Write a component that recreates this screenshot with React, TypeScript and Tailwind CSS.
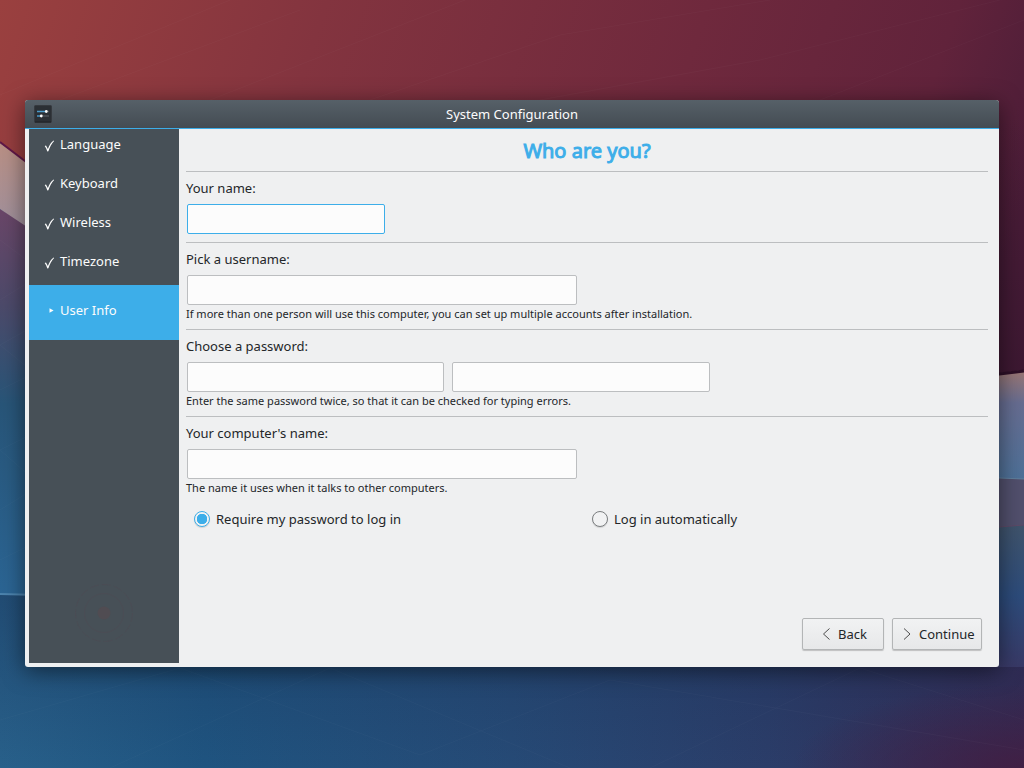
import { useState } from "react";
import type { ReactNode } from "react";

const steps = ["Language", "Keyboard", "Wireless", "Timezone"];

function Wallpaper() {
  return (
    <svg
      className="absolute inset-0 h-full w-full"
      viewBox="0 0 1024 768"
      preserveAspectRatio="none"
      aria-hidden="true"
    >
      <defs>
        <linearGradient id="red" gradientUnits="userSpaceOnUse" x1="0" y1="0" x2="980" y2="330">
          <stop offset="0" stopColor="#9a403f" />
          <stop offset="0.3" stopColor="#83343f" />
          <stop offset="0.65" stopColor="#6f293d" />
          <stop offset="0.88" stopColor="#61233b" />
          <stop offset="1" stopColor="#4c1d38" />
        </linearGradient>
        <linearGradient id="redShade" x1="0" y1="0" x2="0" y2="1">
          <stop offset="0.3" stopColor="#30142c" stopOpacity="0" />
          <stop offset="1" stopColor="#30142c" stopOpacity="0.6" />
        </linearGradient>
        <linearGradient id="blue" x1="0" y1="0" x2="1" y2="0">
          <stop offset="0" stopColor="#28608a" />
          <stop offset="0.2" stopColor="#1f5480" />
          <stop offset="0.5" stopColor="#264a76" />
          <stop offset="0.75" stopColor="#2b3d69" />
          <stop offset="1" stopColor="#352b54" />
        </linearGradient>
        <linearGradient id="leftEdge" x1="0" y1="0" x2="0" y2="1">
          <stop offset="0" stopColor="#6a4668" />
          <stop offset="0.25" stopColor="#4c4a6a" />
          <stop offset="0.5" stopColor="#285578" />
          <stop offset="1" stopColor="#2b6594" />
        </linearGradient>
        <linearGradient id="beam" x1="0" y1="0" x2="0" y2="1">
          <stop offset="0" stopColor="#b98f84" />
          <stop offset="1" stopColor="#9490a6" />
        </linearGradient>
        <linearGradient id="rightBeam" x1="0" y1="0" x2="0" y2="1">
          <stop offset="0" stopColor="#9a7672" />
          <stop offset="0.3" stopColor="#666c90" />
          <stop offset="1" stopColor="#4d7097" />
        </linearGradient>
        <linearGradient id="rightLow" x1="0" y1="0" x2="0" y2="1">
          <stop offset="0" stopColor="#3f536b" />
          <stop offset="0.5" stopColor="#2c4b7a" />
          <stop offset="1" stopColor="#383966" />
        </linearGradient>
        <radialGradient id="corner" cx="1" cy="1" r="0.5">
          <stop offset="0" stopColor="#431c40" stopOpacity="0.8" />
          <stop offset="1" stopColor="#431c40" stopOpacity="0" />
        </radialGradient>
        <linearGradient id="floor" x1="0" y1="0" x2="0" y2="1">
          <stop offset="0" stopColor="#182c50" stopOpacity="0.4" />
          <stop offset="1" stopColor="#182c50" stopOpacity="0" />
        </linearGradient>
      </defs>
      <rect width="1024" height="768" fill="url(#blue)" />
      <rect y="590" width="1024" height="178" fill="url(#floor)" />
      <rect x="560" y="600" width="464" height="168" fill="url(#corner)" />
      <path d="M0 209L80 255V598L0 594Z" fill="url(#leftEdge)" />
      <path d="M0 143L80 200V262L0 209Z" fill="url(#beam)" />
      <path d="M0 0H1024V370L900 386L80 202L0 142Z" fill="url(#red)" />
      <path d="M900 0H1024V370L900 386Z" fill="url(#redShade)" />
      <path d="M0 142L80 203" stroke="#601747" strokeWidth="2" />
      <path d="M900 386L1024 370V480L900 474Z" fill="url(#rightBeam)" />
      <path d="M900 386L1024 371" stroke="#2d1027" strokeWidth="3" />
      <path d="M900 474L1024 479V525L900 535Z" fill="#514f6c" />
      <path d="M900 474L1024 479" stroke="#60809d" strokeWidth="1" />
      <path d="M900 535L1024 525V667H900Z" fill="url(#rightLow)" />
      <path d="M900 535L1024 525" stroke="#5e4b68" strokeWidth="1" />
      <path d="M0 594L80 596" stroke="#4c83ad" strokeWidth="2" />
      <g stroke="#ffffff" strokeOpacity="0.025" fill="none">
        <path d="M0 95L230 0M60 100L300 10M210 100L465 0M370 100L560 35L770 0M540 100L760 60L1000 0M820 100L1024 20" />
        <path d="M0 240L80 300L0 345L80 410L0 450L80 520L0 560M0 300L80 250M0 390L80 350M0 510L80 460" />
        <path d="M0 720L180 668L420 755L610 680L1024 750M110 768L330 668L570 768M650 768L860 668L1024 720" />
      </g>
    </svg>
  );
}

function SettingsIcon() {
  return (
    <svg className="h-[18px] w-[18px]" viewBox="0 0 18 18" aria-hidden="true">
      <rect x="0.5" y="0.5" width="17" height="17" rx="1" fill="#2b2f34" stroke="#363a3f" />
      <path d="M1 17H17" stroke="#202327" />
      <path d="M3 6.5H12" stroke="#4a9ac9" strokeWidth="1.6" />
      <path d="M13.5 6.5H15M8.5 11H15" stroke="#4d5358" strokeWidth="1.6" />
      <path d="M3 11H7" stroke="#4a9ac9" strokeWidth="1.6" />
      <circle cx="12.3" cy="6.5" r="1.4" fill="#fcfcfc" />
      <circle cx="7.3" cy="11" r="1.4" fill="#fcfcfc" />
    </svg>
  );
}

function Check() {
  return (
    <svg className="mt-1 h-3 w-[11px] shrink-0" viewBox="0 0 11 12" aria-hidden="true">
      <path
        d="M0.7 6.1L2 5.4L3.9 9.1C5.2 5.4 7 2.4 9.7 0.5L10.1 0.9C7.5 4 5.6 7.3 4.4 11.3L3.3 11.5C2.7 9.5 1.9 7.8 0.7 6.1Z"
        fill="#fcfcfc"
      />
    </svg>
  );
}

function Ripple() {
  return (
    <svg className="mx-auto h-[60px] w-[60px]" viewBox="0 0 60 60" fill="none" aria-hidden="true">
      <circle cx="30" cy="30" r="6.5" fill="#504c52" />
      <circle cx="30" cy="30" r="19.5" stroke="#4b4d55" />
      <circle cx="30" cy="30" r="28.5" stroke="#4b4d55" strokeDasharray="9 3" />
    </svg>
  );
}

function Section({ id, label, hint, children }: { id: string; label: string; hint?: string; children: ReactNode }) {
  return (
    <section className="border-t border-[#bcbec0] pb-2">
      <label htmlFor={id} className="block h-8 text-[13px] leading-8">{label}</label>
      <div className="flex gap-2 px-px">{children}</div>
      {hint && <p className="h-4 text-[11px] leading-[18px]">{hint}</p>}
    </section>
  );
}

const field = "h-[30px] min-w-0 rounded-xs border bg-[#fcfcfc] px-2 text-[13px] outline-none focus:border-[#3daee9]";

const button =
  "flex h-8 items-center rounded-xs border border-[#b3b5b6] bg-linear-to-b from-[#f1f2f3] to-[#e7e8e9] pt-px text-[13px] shadow-[0_1px_1px_rgba(0,0,0,0.2)]";

function Radio({ label, checked, onChange }: { label: string; checked: boolean; onChange: () => void }) {
  return (
    <label className="flex items-center gap-[6px] text-[13px] leading-5">
      <input
        type="radio"
        name="login"
        checked={checked}
        onChange={onChange}
        className="h-4 w-4 appearance-none rounded-full border border-[#7b7e80] bg-[#f1f2f3] shadow-[0_1px_1px_rgba(0,0,0,0.12)] checked:border-[#3daee9] checked:bg-[radial-gradient(circle,#3daee9_5px,#f1f2f3_5.5px)]"
      />
      {label}
    </label>
  );
}

export default function App() {
  const [auto, setAuto] = useState(false);
  return (
    <div className="relative flex min-h-screen flex-col overflow-hidden px-[25px] pt-[100px] pb-[101px] font-['Noto_Sans',sans-serif] text-[#232629]">
      <Wallpaper />
      <div className="relative flex flex-1 flex-col overflow-hidden rounded-[3px] bg-[#eff0f1] shadow-[0_4px_22px_rgba(0,0,0,0.5)]">
        <header className="grid h-[29px] grid-cols-[1fr_auto_1fr] items-center border-b border-[#3daee9] bg-linear-to-b from-[#566068] to-[#444c53] px-[9px] text-[#fcfcfc]">
          <SettingsIcon />
          <h1 className="text-[13px] leading-5">System Configuration</h1>
        </header>
        <div className="flex flex-1">
          <nav className="mb-1 ml-1 flex w-[150px] shrink-0 flex-col bg-[#475057] text-[13px] leading-5 text-[#fcfcfc]">
            <ul className="flex flex-col gap-[19px] pt-[5px] pb-[14px]">
              {steps.map((step) => (
                <li key={step} className="flex items-center gap-[5px] pl-[15px]">
                  <Check />
                  {step}
                </li>
              ))}
            </ul>
            <div className="flex h-[55px] items-center bg-[#3daee9] pb-[6px] pl-5" aria-current="step">
              <svg className="mt-[2px] mr-[6px] h-[5px] w-[5px]" viewBox="0 0 5 5" aria-hidden="true">
                <path d="M0.5 0.3L4.6 2.5L0.5 4.7Z" fill="#fcfcfc" />
              </svg>
              User Info
            </div>
            <div className="mt-auto mb-5">
              <Ripple />
            </div>
          </nav>
          <form className="flex min-w-0 flex-1 flex-col pr-[11px] pl-[7px]" onSubmit={(e) => e.preventDefault()}>
            <h2 className="h-[42px] text-center text-[20px] leading-[44px] text-[#3daee9] [-webkit-text-stroke:1px_#3daee9]">
              Who are you?
            </h2>
            <Section id="name" label="Your name:">
              <input id="name" type="text" className={`${field} w-[198px] border-[#3daee9]`} />
            </Section>
            <Section
              id="username"
              label="Pick a username:"
              hint="If more than one person will use this computer, you can set up multiple accounts after installation."
            >
              <input id="username" type="text" className={`${field} w-[390px] border-[#bcbec0]`} />
            </Section>
            <Section
              id="password"
              label="Choose a password:"
              hint="Enter the same password twice, so that it can be checked for typing errors."
            >
              <input id="password" type="password" className={`${field} w-[257px] border-[#bcbec0]`} />
              <input
                type="password"
                aria-label="Repeat the password"
                className={`${field} w-[258px] border-[#bcbec0]`}
              />
            </Section>
            <Section id="host" label="Your computer's name:" hint="The name it uses when it talks to other computers.">
              <input id="host" type="text" className={`${field} w-[390px] border-[#bcbec0]`} />
            </Section>
            <div className="mt-[6px] grid grid-cols-2 gap-x-[2px] pl-2">
              <Radio label="Require my password to log in" checked={!auto} onChange={() => setAuto(false)} />
              <Radio label="Log in automatically" checked={auto} onChange={() => setAuto(true)} />
            </div>
            <div className="mt-auto mb-[17px] flex justify-end gap-2 pr-[6px]">
              <button type="button" className={`${button} w-[82px] gap-2 pl-[19px]`}>
                <svg className="mb-[2px] h-3 w-2" viewBox="0 0 8 12" fill="none" stroke="#4d4d4d" aria-hidden="true">
                  <path d="M7.5 0.5L1.5 6L7.5 11.5" />
                </svg>
                Back
              </button>
              <button type="submit" className={`${button} w-[90px] gap-2 pl-[10px]`}>
                <svg className="mb-[2px] h-3 w-2" viewBox="0 0 8 12" fill="none" stroke="#4d4d4d" aria-hidden="true">
                  <path d="M1 0.5L7 6L1 11.5" />
                </svg>
                Continue
              </button>
            </div>
          </form>
        </div>
      </div>
    </div>
  );
}
